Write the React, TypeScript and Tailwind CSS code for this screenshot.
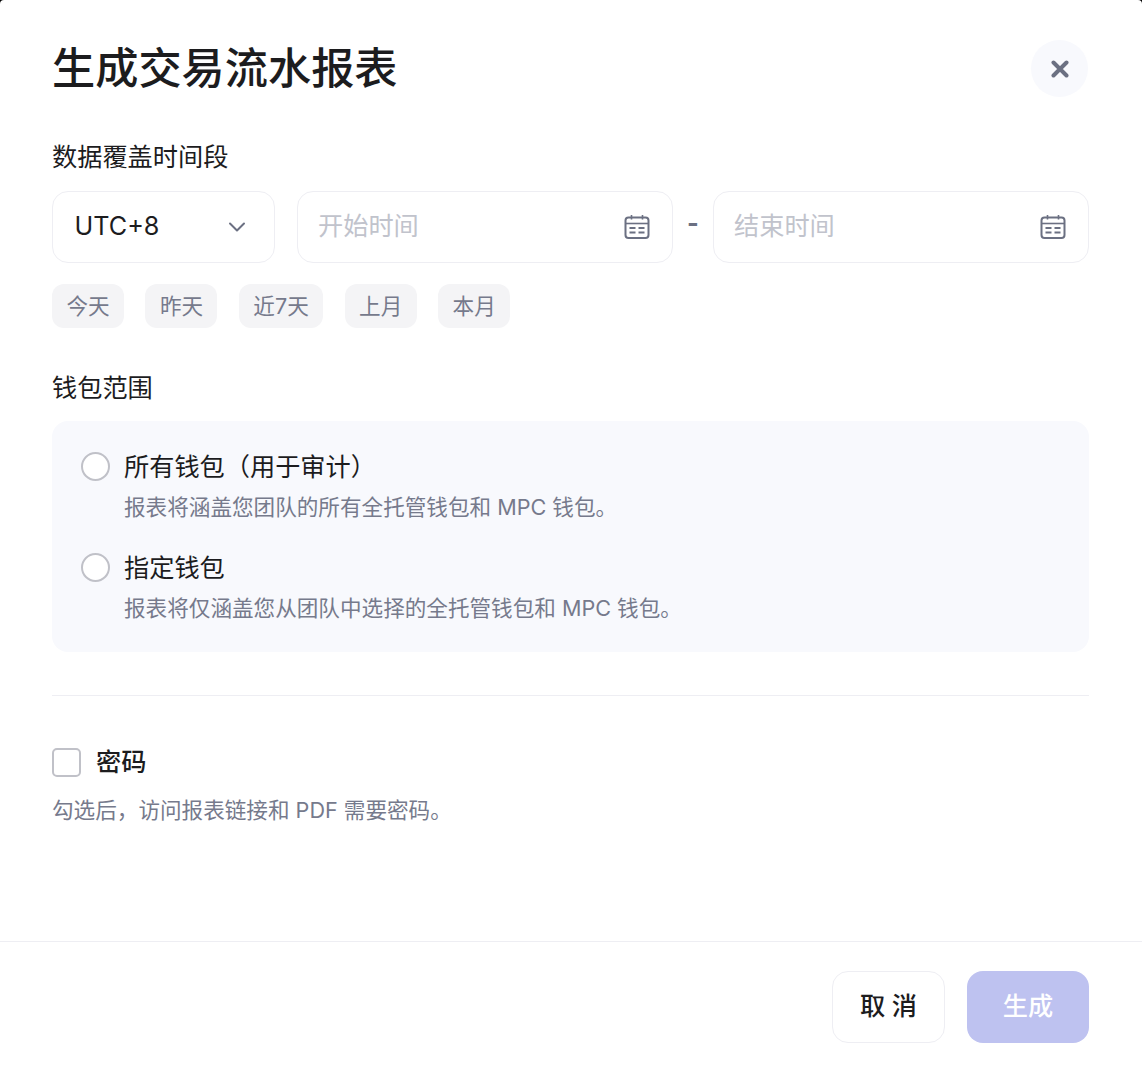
import React from 'react';

const chips = ['今天', '昨天', '近7天', '上月', '本月'];

const CalendarIcon = () => (
  <svg className="h-[26px] w-[26px] shrink-0 text-[#6b7082]" viewBox="0 0 26 26" fill="none" stroke="currentColor">
    <rect x="1.5" y="3.5" width="23" height="20.5" rx="3" strokeWidth="2" />
    <path d="M1.5 9.5h23" strokeWidth="1.6" />
    <path d="M7.5 1v4.5M18.5 1v4.5" strokeWidth="1.6" />
    <path d="M5.5 14h6M14.5 14h6M5.5 18.5h6M14.5 18.5h6" strokeWidth="1.8" />
  </svg>
);

const DateInput = ({ placeholder }: { placeholder: string }) => (
  <div className="flex h-[72px] w-[376px] items-center justify-between rounded-2xl border border-[#eeeef3] bg-white pl-[20px] pr-[22px]">
    <span className="text-[25.2px] text-[#c1c3cc]">{placeholder}</span>
    <CalendarIcon />
  </div>
);

const WalletOption = ({ title, desc }: { title: string; desc: string }) => (
  <div className="flex gap-[14px]">
    <div className="mt-[2px] h-[29px] w-[29px] shrink-0 rounded-full border-2 border-[#c0c1c8] bg-white" />
    <div>
      <div className="text-[25.2px] leading-[34px] text-[#1c1c1e]">{title}</div>
      <div className="mt-[8px] text-[21.6px] leading-[30px] text-[#767a8c]">{desc}</div>
    </div>
  </div>
);

export default function App() {
  return (
    <div
      className="h-[1066px] w-[1142px] overflow-hidden bg-black"
      style={{ fontFamily: 'Inter, "Noto Sans CJK SC", sans-serif' }}
    >
      <div className="flex h-full flex-col rounded-t-[4px] bg-white">
        <div className="flex-1 pb-0 pl-[52px] pr-[53px] pt-[40px]">
          <div className="flex items-start justify-between">
            <h1 className="text-[43.2px] font-medium leading-[57px] text-[#1c1c1e]">生成交易流水报表</h1>
            <button type="button" className="mr-px flex h-[57px] w-[57px] items-center justify-center rounded-full bg-[#f8f9fd]">
              <svg className="h-[18px] w-[18px] text-[#6b7082]" viewBox="0 0 18 18" fill="none" stroke="currentColor" strokeWidth="4" strokeLinecap="round">
                <path d="M2.5 2.5l13 13M15.5 2.5l-13 13" />
              </svg>
            </button>
          </div>

          <div className="mt-[43px] text-[25.2px] leading-[34px] text-[#1c1c1e]">数据覆盖时间段</div>

          <div className="mt-[17px] flex items-center">
            <div className="flex h-[72px] w-[223px] items-center justify-between rounded-2xl border border-[#eeeef3] bg-white pl-[21.5px] pr-[28px]">
              <span className="text-[25.2px] text-[#1c1c1e]">UTC+8</span>
              <svg className="h-[12px] w-[18px] text-[#6b7082]" viewBox="0 0 18 12" fill="none" stroke="currentColor" strokeWidth="2" strokeLinecap="round" strokeLinejoin="round">
                <path d="M2 2.5l7 7 7-7" />
              </svg>
            </div>
            <div className="ml-[22px]">
              <DateInput placeholder="开始时间" />
            </div>
            <div className="flex w-[40px] justify-center pb-[6px] text-[25.2px] font-bold text-[#6b7082]">-</div>
            <DateInput placeholder="结束时间" />
          </div>

          <div className="mt-[21px] flex gap-[21.5px]">
            {chips.map((chip) => (
              <div
                key={chip}
                className="flex h-[44px] items-center justify-center rounded-xl bg-[#f4f4f6] px-[14.4px] text-[21.6px] text-[#767a8c]"
              >
                {chip}
              </div>
            ))}
          </div>

          <div className="mt-[43px] text-[25.2px] leading-[34px] text-[#1c1c1e]">钱包范围</div>

          <div className="mt-[16px] flex flex-col gap-[29px] rounded-2xl bg-[#f8f9fd] p-[29px]">
            <WalletOption title="所有钱包（用于审计）" desc="报表将涵盖您团队的所有全托管钱包和 MPC 钱包。" />
            <WalletOption title="指定钱包" desc="报表将仅涵盖您从团队中选择的全托管钱包和 MPC 钱包。" />
          </div>

          <div className="mt-[43px] h-px bg-[#eeeef3]" />

          <div className="mt-[51px] flex items-center gap-[15px]">
            <div className="h-[29px] w-[29px] rounded-[5px] border-2 border-[#c0c1c8] bg-white" />
            <span className="text-[25.2px] font-medium leading-[30px] text-[#1c1c1e]">密码</span>
          </div>
          <div className="mt-[18px] text-[21.6px] leading-[30px] text-[#767a8c]">勾选后，访问报表链接和 PDF 需要密码。</div>
        </div>

        <div className="flex h-[125px] justify-end gap-[22px] border-t border-[#eeeef3] pr-[53px] pt-[29px]">
          <button type="button" className="h-[72px] w-[113px] rounded-2xl border border-[#eeeef3] bg-white text-[25.2px] font-medium text-[#1c1c1e]">
            取 消
          </button>
          <button type="button" className="h-[72px] w-[122px] rounded-2xl bg-[#bec2f0] text-[25.2px] font-medium text-white">
            生成
          </button>
        </div>
      </div>
    </div>
  );
}
